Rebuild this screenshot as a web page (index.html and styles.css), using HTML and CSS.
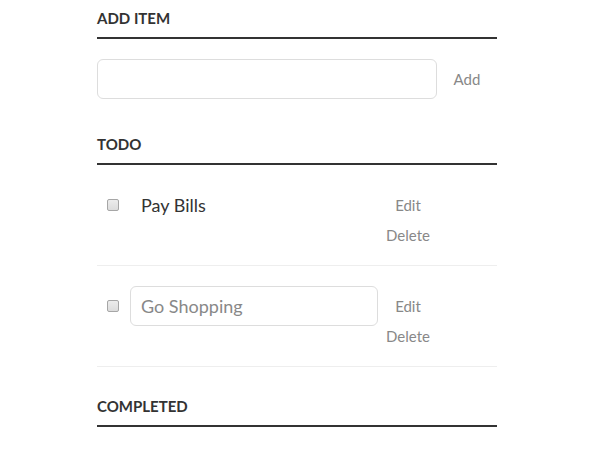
FILE: index.html
```html
<!DOCTYPE html>
<html>
<head>
<meta charset="utf-8">
<title>Todo</title>
<link rel="stylesheet" href="styles.css">
</head>
<body>
<div class="container">
  <h3 class="heading heading-first">Add Item</h3>
  <div class="add-row">
    <input type="text" class="text-input new-task">
    <button class="btn">Add</button>
  </div>
  <h3 class="heading">Todo</h3>
  <ul class="task-list">
    <li class="task">
      <input type="checkbox" class="check">
      <label class="task-label">Pay Bills</label>
      <div class="actions">
        <button class="btn">Edit</button>
        <button class="btn">Delete</button>
      </div>
    </li>
    <li class="task">
      <input type="checkbox" class="check">
      <input type="text" class="text-input task-input" value="Go Shopping">
      <div class="actions">
        <button class="btn">Edit</button>
        <button class="btn">Delete</button>
      </div>
    </li>
  </ul>
  <h3 class="heading">Completed</h3>
  <ul class="task-list"></ul>
</div>
</body>
</html>
```

FILE: styles.css
```css
body {
  margin: 0;
  background: #fff;
  color: #333;
  font-family: Lato, "Open Sans", sans-serif;
}

.container {
  width: 400px;
  margin: 0 0 0 97px;
}

.heading {
  margin: 0;
  padding: 30px 0 10px;
  font-family: Lato, sans-serif;
  font-weight: 700;
  font-size: 15px;
  line-height: 18px;
  color: #333;
  text-transform: uppercase;
  border-bottom: 2px solid #333;
}

.heading-first {
  padding-top: 9px;
}

.add-row {
  display: flex;
  align-items: flex-start;
  padding: 20px 0 6px;
}

.text-input {
  box-sizing: border-box;
  height: 40px;
  margin: 0;
  padding: 0 10px;
  border: 1px solid #ddd;
  border-radius: 6px;
  background: #fff;
  font-family: Lato, sans-serif;
  font-size: 18px;
  color: #888;
  outline: none;
}

.new-task {
  width: 340px;
}

.btn {
  width: 60px;
  margin: 10px 0 0;
  padding: 1px 6px;
  border: 0;
  background: none;
  font-family: Lato, sans-serif;
  font-size: 15px;
  line-height: 18px;
  color: #888;
  cursor: pointer;
}

.task-list {
  margin: 0;
  padding: 0;
  list-style: none;
}

.task {
  display: flex;
  align-items: flex-start;
  padding: 20px 0;
  border-bottom: 1px solid #eee;
}

.check {
  -webkit-appearance: none;
  appearance: none;
  box-sizing: border-box;
  width: 12px;
  height: 12px;
  margin: 14px 11px 0 10px;
  border: 1px solid #a6a6a6;
  border-radius: 2px;
  background: linear-gradient(#ececec, #dcdcdc);
}

.task-label {
  box-sizing: border-box;
  width: 248px;
  padding-left: 11px;
  font-size: 18px;
  line-height: 40px;
  color: #333;
}

.task-input {
  width: 248px;
}

.actions {
  display: flex;
  flex-direction: column;
  width: 60px;
}
```
